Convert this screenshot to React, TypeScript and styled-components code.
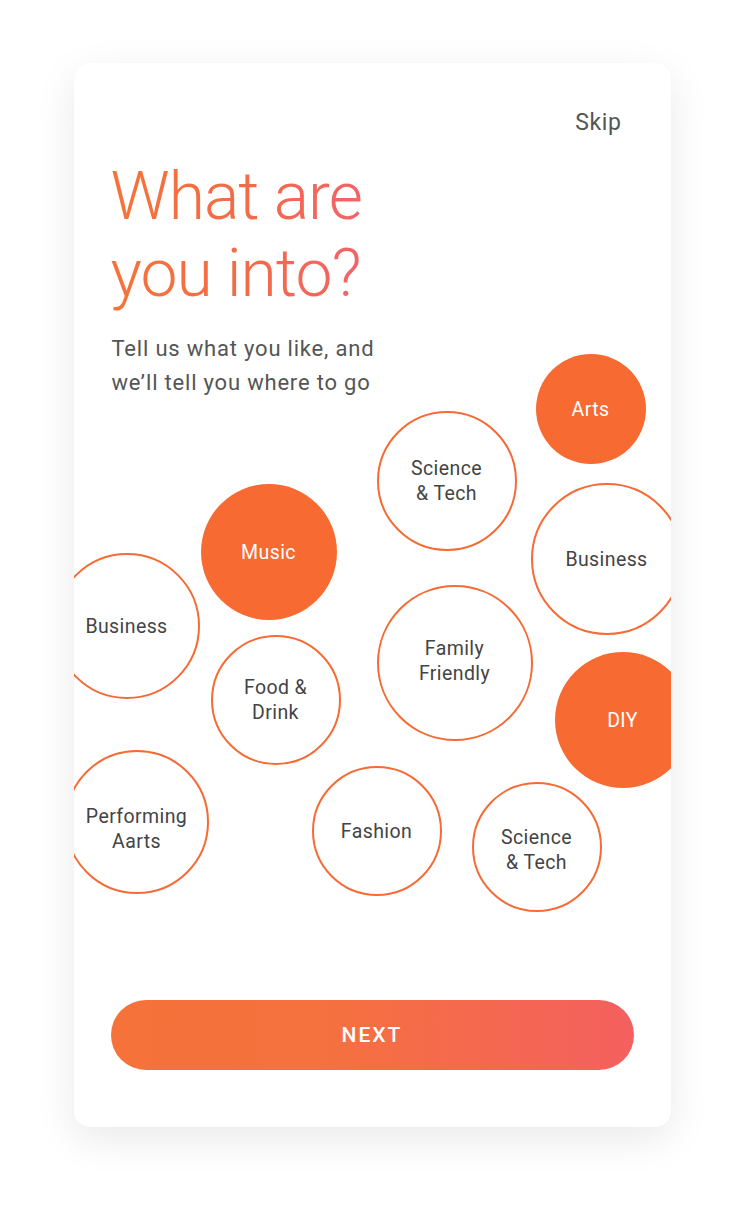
import React from "react";
import styled, { createGlobalStyle } from "styled-components";

const Global = createGlobalStyle`
  html, body { margin: 0; padding: 0; background: #ffffff; }
  body { font-family: Roboto, "Liberation Sans", sans-serif; }
  * { box-sizing: border-box; }
`;

const Page = styled.div`
  width: 744px;
  min-height: 1212px;
  padding-top: 63px;
  display: flex;
  justify-content: center;
`;

const Card = styled.div`
  width: 597px;
  height: 1064px;
  background: #fff;
  border-radius: 16px;
  box-shadow: 0 12px 40px rgba(0, 0, 0, 0.09);
  overflow: hidden;
  display: flex;
  flex-direction: column;
`;

const TopBar = styled.div`
  display: flex;
  justify-content: flex-end;
  padding: 46px 49px 0 0;
`;

const Skip = styled.button`
  background: none;
  border: none;
  padding: 0;
  font-family: Roboto, "Liberation Sans", sans-serif;
  font-size: 23px;
  letter-spacing: 0.6px;
  color: #555;
  line-height: 28px;
`;

const Title = styled.h1`
  margin: 21px 0 0 37px;
  font-family: Roboto, "Liberation Sans", sans-serif;
  font-weight: 300;
  font-size: 66px;
  line-height: 77px;
  letter-spacing: -1px;
  width: fit-content;
  background: linear-gradient(90deg, #f6733a 0%, #f36a4a 60%, #f2636a 100%);
  -webkit-background-clip: text;
  background-clip: text;
  color: transparent;
`;

const Subtitle = styled.p`
  margin: 20px 0 0 38px;
  font-family: Roboto, "Liberation Sans", sans-serif;
  font-size: 22px;
  line-height: 34px;
  letter-spacing: 0.8px;
  color: #555;
`;

const Canvas = styled.div`
  position: relative;
  height: 530px;
  margin-top: 0;
`;

const Bubble = styled.div<{ $filled?: boolean }>`
  position: absolute;
  border-radius: 50%;
  display: flex;
  align-items: center;
  justify-content: center;
  text-align: center;
  font-family: Roboto, "Liberation Sans", sans-serif;
  font-size: 19.5px;
  line-height: 25px;
  letter-spacing: 0.4px;
  background: ${(p) => (p.$filled ? "#f76a32" : "#fff")};
  color: ${(p) => (p.$filled ? "#fff" : "#444")};
  border: ${(p) => (p.$filled ? "none" : "2px solid #f66b35")};
`;

const Label = styled.span<{ $dy?: number }>`
  display: block;
  transform: translateY(${(p) => p.$dy ?? 0}px);
`;

const ButtonRow = styled.div`
  padding: 70px 37px 0 37px;
`;

const NextButton = styled.button`
  width: 100%;
  height: 70px;
  border: none;
  border-radius: 35px;
  background: linear-gradient(90deg, #f5723a 0%, #f5713e 40%, #f4605f 100%);
  color: #fff;
  font-family: Roboto, "Liberation Sans", sans-serif;
  font-size: 21px;
  font-weight: 500;
  letter-spacing: 2px;
`;

type B = { label: string[]; x: number; y: number; r: number; filled?: boolean; dy?: number };

const bubbles: B[] = [
  { label: ["Arts"], x: 517, y: 9, r: 55, filled: true },
  { label: ["Science", "& Tech"], x: 373, y: 81, r: 70 },
  { label: ["Music"], x: 195, y: 152, r: 68, filled: true },
  { label: ["Business"], x: 533, y: 159, r: 76 },
  { label: ["Business"], x: 53, y: 226, r: 73 },
  { label: ["Food &", "Drink"], x: 202, y: 300, r: 65 },
  { label: ["Family", "Friendly"], x: 381, y: 263, r: 78, dy: -2 },
  { label: ["DIY"], x: 549, y: 320, r: 68, filled: true },
  { label: ["Performing", "Aarts"], x: 63, y: 422, r: 72, dy: 7 },
  { label: ["Fashion"], x: 303, y: 431, r: 65 },
  { label: ["Science", "& Tech"], x: 463, y: 447, r: 65, dy: 3 },
];

export default function App() {
  return (
    <>
      <Global />
      <Page>
        <Card>
          <TopBar>
            <Skip>Skip</Skip>
          </TopBar>
          <Title>
            What are
            <br />
            you into?
          </Title>
          <Subtitle>
            Tell us what you like, and
            <br />
            we’ll tell you where to go
          </Subtitle>
          <Canvas>
            {bubbles.map((b, i) => (
              <Bubble
                key={i}
                $filled={b.filled}
                style={{ left: b.x - b.r, top: b.y - b.r, width: b.r * 2, height: b.r * 2 }}
              >
                <Label $dy={b.dy}>
                  {b.label.map((l, j) => (
                    <React.Fragment key={j}>
                      {j > 0 && <br />}
                      {l}
                    </React.Fragment>
                  ))}
                </Label>
              </Bubble>
            ))}
          </Canvas>
          <ButtonRow>
            <NextButton>NEXT</NextButton>
          </ButtonRow>
        </Card>
      </Page>
    </>
  );
}
